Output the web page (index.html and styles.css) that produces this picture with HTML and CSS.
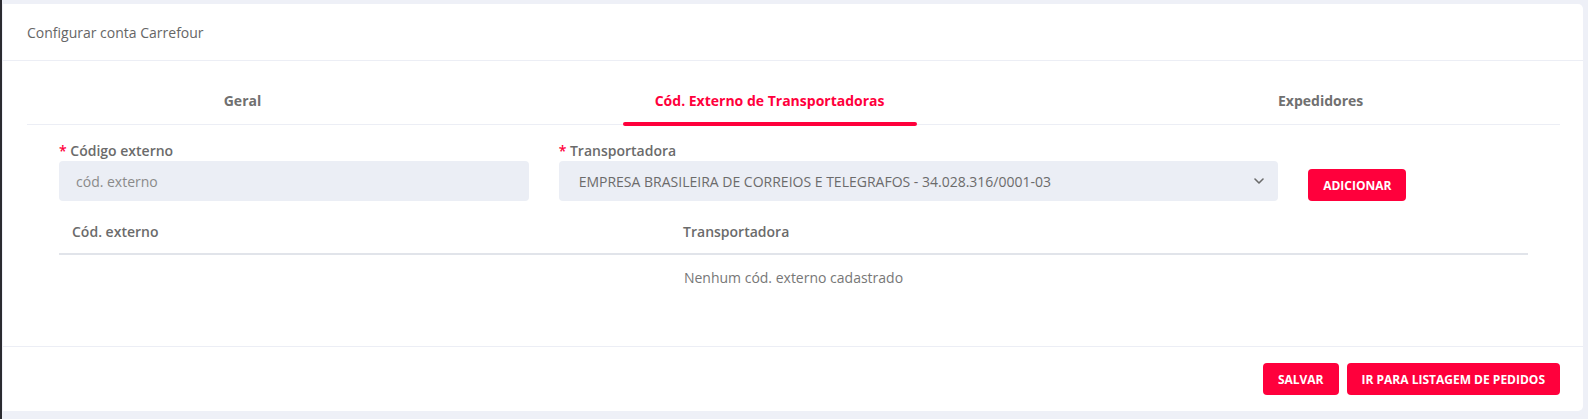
FILE: index.html
```html
<!DOCTYPE html>
<html lang="pt-BR">
<head>
<meta charset="utf-8">
<title>Configurar conta Carrefour</title>
<link rel="stylesheet" href="styles.css">
</head>
<body>
<div class="page">
  <div class="edge"></div>
  <main class="main">
    <section class="card">
      <header class="card-header">Configurar conta Carrefour</header>
      <div class="card-body">
        <nav class="tabs">
          <div class="tab"><span class="tab-label">Geral</span></div>
          <div class="tab active"><span class="tab-label">Cód. Externo de Transportadoras</span></div>
          <div class="tab"><span class="tab-label">Expedidores</span></div>
        </nav>
        <div class="panel">
          <div class="form-row">
            <div class="col col-4">
              <label class="field-label"><span class="req">*</span> Código externo</label>
              <div class="input placeholder">cód. externo</div>
            </div>
            <div class="col col-6">
              <label class="field-label"><span class="req">*</span> Transportadora</label>
              <div class="input select">
                <span>EMPRESA BRASILEIRA DE CORREIOS E TELEGRAFOS - 34.028.316/0001-03</span>
                <svg class="chev" width="10" height="6" viewBox="0 0 10 6"><path d="M1 1l4 4 4-4" fill="none" stroke="#6b6b6b" stroke-width="1.6" stroke-linecap="round" stroke-linejoin="round"/></svg>
              </div>
            </div>
            <div class="col col-2">
              <button class="btn">ADICIONAR</button>
            </div>
          </div>
          <div class="table">
            <div class="thead">
              <div class="th th-code">Cód. externo</div>
              <div class="th">Transportadora</div>
            </div>
            <div class="empty">Nenhum cód. externo cadastrado</div>
          </div>
        </div>
      </div>
      <footer class="card-footer">
        <button class="btn">SALVAR</button>
        <button class="btn">IR PARA LISTAGEM DE PEDIDOS</button>
      </footer>
    </section>
  </main>
</div>
</body>
</html>
```
FILE: styles.css
```css
* { box-sizing: border-box; }
html, body { margin: 0; padding: 0; }
body {
  font-family: "Open Sans", "Noto Sans", sans-serif;
  background: #eef0f7;
  color: #6b6b6b;
  width: 1588px;
  height: 419px;
  overflow: hidden;
}
.page { display: flex; height: 419px; }
.edge { width: 2px; background: #2b2b30; flex: none; }
.main { flex: 1; padding: 4px 5px 8px 1px; }
.card {
  background: #fff;
  border-radius: 0 5px 5px 0;
  height: 407px;
  display: flex;
  flex-direction: column;
}
.card-header {
  height: 57px;
  padding: 0 24px;
  display: flex;
  align-items: center;
  font-size: 14px;
  color: #666;
  border-bottom: 1px solid #eceef5;
}
.card-body { flex: 1; padding: 16px 23px 0 24px; border-bottom: 1px solid #eceef5; }
.tabs { display: flex; border-bottom: 1px solid #eceef5; }
.tab {
  flex: 1 1 auto;
  display: flex;
  justify-content: center;
  height: 47px;
}
.tab-label {
  position: relative;
  display: flex;
  align-items: center;
  padding: 0 32px;
  font-size: 14px;
  font-weight: 700;
  color: #707070;
  white-space: nowrap;
}
.tab.active .tab-label { color: #ff003c; }
.tab.active .tab-label::after {
  content: "";
  position: absolute;
  left: 0; right: 0; bottom: -2px;
  height: 4px;
  border-radius: 2px;
  background: #ff003c;
}
.panel { padding: 15px 32px 0 32px; }
.form-row { display: flex; align-items: flex-end; margin: 0 -15px; }
.col { padding: 0 15px; }
.col-4 { flex: 0 0 33.3333%; }
.col-6 { flex: 0 0 50%; }
.col-2 { flex: 0 0 16.6667%; }
.field-label {
  display: block;
  font-size: 14px;
  font-weight: 600;
  line-height: 21px;
  color: #6b6b6b;
}
.req { color: #ff003c; }
.input {
  height: 40px;
  background: #ebeef5;
  border-radius: 4px;
  display: flex;
  align-items: center;
  padding: 0 17px;
  font-size: 14px;
  color: #6b6b6b;
}
.placeholder { color: #8a8a8a; }
.select { padding: 0 14px 0 20px; justify-content: space-between; white-space: nowrap; }
.chev { flex: none; }
.btn {
  height: 32px;
  padding: 0 15px;
  border: none;
  border-radius: 4px;
  background: #ff003c;
  color: #fff;
  font-family: inherit;
  font-size: 12px;
  font-weight: 700;
}
.table { margin-top: 8px; }
.thead { display: flex; border-bottom: 2px solid #e1e4ea; }
.th {
  height: 44px;
  display: flex;
  align-items: center;
  padding: 0 12px;
  font-size: 14px;
  font-weight: 600;
  color: #6b6b6b;
}
.th-code { flex: 0 0 41.6667%; padding-left: 13px; }
.empty {
  height: 44px;
  display: flex;
  align-items: center;
  justify-content: center;
  font-size: 14px;
  color: #777;
}
.card-footer {
  height: 64px;
  display: flex;
  justify-content: flex-end;
  align-items: center;
  gap: 8px;
  padding: 0 23px;
}
```
